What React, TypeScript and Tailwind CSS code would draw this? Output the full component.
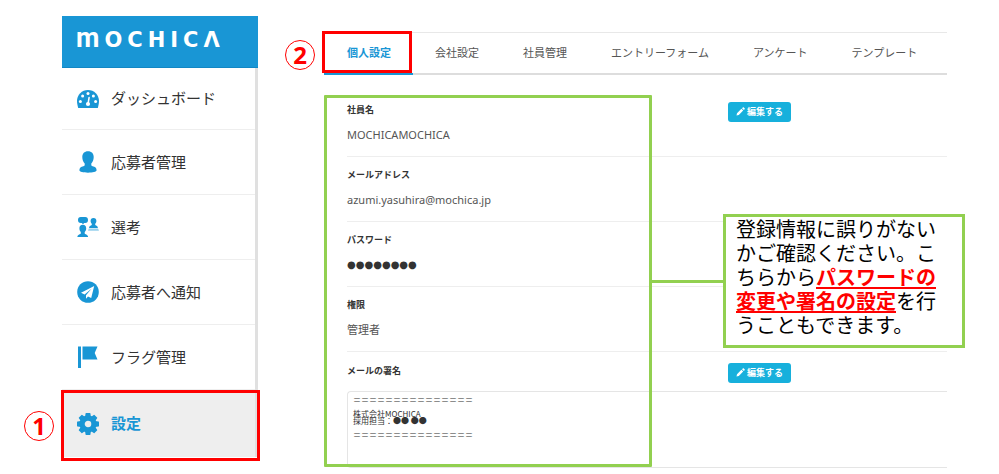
import React, { useState } from 'react';

const GaugeIcon = () => (
  <svg width="22" height="18" viewBox="0 0 22 18" aria-hidden="true">
    <path d="M11 0C4.9 0 0 4.9 0 11c0 2.2.6 4.9 1.200 7h19.600c.6-2.100 1.200-4.800 1.200-7C22 4.900 17.100 0 11 0z" fill="#1996d5" />
    <g fill="#fff">
      <circle cx="3.400" cy="11.500" r="1.500" />
      <circle cx="5.600" cy="6" r="1.500" />
      <circle cx="11" cy="3.600" r="1.500" />
      <circle cx="16.400" cy="6" r="1.500" />
      <circle cx="18.600" cy="11.500" r="1.500" />
      <circle cx="11" cy="14" r="2.100" />
    </g>
    <path d="M11 14l1.100-6.500" stroke="#fff" strokeWidth="1.500" strokeLinecap="round" />
  </svg>
);

const UserIcon = () => (
  <svg width="22" height="22" viewBox="0 0 22 22" fill="#1996d5" aria-hidden="true">
    <path d="M11 .3c3.700 0 5.700 2.200 5.700 5.800 0 2.900-1 5.100-2.400 6.500v1.400c0 .7.600 1 1.300 1.200 2.600.6 4 1.700 4 4.100 0 1.600-4 2.400-8.600 2.400s-8.600-.8-8.600-2.400c0-2.400 1.400-3.500 4-4.100.7-.2 1.300-.5 1.300-1.200v-1.400C6.300 11.200 5.300 9 5.300 6.100 5.300 2.500 7.300.3 11 .3z" />
  </svg>
);

const SelectionIcon = () => (
  <svg width="22" height="22" viewBox="0 0 22 22" fill="#1996d5" aria-hidden="true">
    <path d="M3.800 1h4.400c1.900 0 2.800 1.200 2.800 2.900S10.100 7 8.200 7H7.200L6 8.200 4.800 7h-1C1.900 7 1 5.600 1 3.900S1.900 1 3.800 1z" />
    <path d="M5.800 8.800c2.200 0 3.400 1.300 3.400 3.500 0 1.700-.6 3-1.500 3.800v1.500c0 1 3.400.8 3.400 3.400H.4c0-2.600 3.400-2.400 3.400-3.400v-1.500c-.8-.8-1.400-2.100-1.400-3.800 0-2.200 1.200-3.500 3.400-3.500z" />
    <path d="M16.500 2c1.900 0 2.900 1.100 2.900 2.900 0 1.200-.5 2.100-1.200 2.800v1.100c0 .9 2.700.8 2.700 3.200h-8.800c0-2.400 2.700-2.300 2.700-3.200V7.700c-.7-.7-1.200-1.600-1.200-2.800 0-1.800 1-2.900 2.900-2.900z" />
    <path d="M11.800 12.500h9.200l1 2.200H11z" opacity=".45" />
  </svg>
);

const PlaneIcon = () => (
  <svg width="22" height="22" viewBox="0 0 22 22" aria-hidden="true">
    <circle cx="11" cy="11" r="10.800" fill="#1996d5" />
    <path d="M17.200 5L4 11.800l3.600 1.700L14.500 7.800 9 14.200v3.600l2-2.300 3.200 1.400z" fill="#fff" />
  </svg>
);

const FlagIcon = () => (
  <svg width="22" height="22" viewBox="0 0 22 22" fill="#1996d5" aria-hidden="true">
    <path d="M1 .5h3V22H1zM5.500.5h15L17.700 7l2.800 6.500h-15z" />
  </svg>
);

const GearIcon = () => (
  <svg width="22" height="22" viewBox="0 0 22 22" aria-hidden="true">
    <circle cx="11" cy="11" r="5.900" fill="none" stroke="#1996d5" strokeWidth="5.200" />
    <g fill="#1996d5">
      {[0, 45, 90, 135, 180, 225, 270, 315].map(angle => (
        <path key={angle} d="M8 4L8.600.5q.1-.5.6-.5h3.600q.5 0 .6.500L14 4z" transform={`rotate(${angle} 11 11)`} />
      ))}
    </g>
  </svg>
);

const PencilIcon = () => (
  <svg width="9" height="9" viewBox="0 0 9 9" fill="#fff" aria-hidden="true">
    <path d="M.5 8.500l.5-2.300L5.400 1.800l1.800 1.800L2.800 8zM6 1.200l.8-.8c.3-.3.7-.3 1 0l.8.800c.3.300.3.700 0 1l-.8.800z" />
  </svg>
);

const menuItems = [
  { label: 'ダッシュボード', icon: GaugeIcon },
  { label: '応募者管理', icon: UserIcon },
  { label: '選考', icon: SelectionIcon },
  { label: '応募者へ通知', icon: PlaneIcon },
  { label: 'フラグ管理', icon: FlagIcon },
];

const tabs = ['個人設定', '会社設定', '社員管理', 'エントリーフォーム', 'アンケート', 'テンプレート'];

const profile = [
  { label: '社員名', value: 'MOCHICAMOCHICA', editable: true },
  { label: 'メールアドレス', value: 'azumi.yasuhira@mochica.jp' },
  { label: 'パスワード', value: '●●●●●●●●', secret: true },
  { label: '権限', value: '管理者' },
];

const rule = '＝＝＝＝＝＝＝＝＝＝＝＝＝＝＝';
const defaultSignature = `${rule}\n\n株式会社MOCHICA\n採用担当：●● ●●\n\n${rule}`;

const StepNumber = ({ children }: { children: React.ReactNode }) => (
  <span className="flex size-[30px] items-center justify-center rounded-full border border-[#ff0000] text-2xl font-bold leading-none text-[#ff0000]">
    {children}
  </span>
);

const EditButton = () => (
  <button type="button" className="flex h-5 items-center gap-[2px] rounded-[3px] bg-[#17b0dc] px-2 pb-px text-[9px] font-bold leading-none text-white">
    <PencilIcon />
    編集する
  </button>
);

const Sidebar = () => (
  <aside className="w-[196px] shrink-0">
    <div className="flex h-[52px] items-baseline gap-[5px] border-b border-[#1287c4] bg-[#1996d5] px-[14px] pt-3 font-['DejaVu_Sans'] text-[21px] font-bold leading-none text-white">
      <span className="font-[Roboto] text-[27px] leading-5">m</span>
      <span>O</span>
      <span>C</span>
      <span>H</span>
      <span>I</span>
      <span>C</span>
      <span>Λ</span>
    </div>
    <nav className="border-r-[3px] border-[#e0e0e0] text-[15px]">
      {menuItems.map(({ label, icon: Icon }) => (
        <a key={label} href="#" className="flex h-[65px] items-center gap-3 border-b border-[#eee] pl-[15px] text-[#333] first:h-[62px]">
          <Icon />
          {label}
        </a>
      ))}
      <div className="relative">
        <a href="#" className="flex h-[67px] items-center gap-3 bg-[#eee] pl-[15px] font-bold text-[#1996d5]">
          <GearIcon />
          設定
        </a>
        <div className="pointer-events-none absolute top-0 -right-[5px] -bottom-1 -left-px border-[3px] border-[#ff0000]" />
        <div className="absolute top-[21px] -left-[38px]">
          <StepNumber>1</StepNumber>
        </div>
      </div>
    </nav>
  </aside>
);

export default function App() {
  const [activeTab, setActiveTab] = useState(tabs[0]);
  const [signature, setSignature] = useState(defaultSignature);

  return (
    <div className="flex min-h-screen bg-white pt-4 pr-[52px] pl-[62px] font-['Noto_Sans','Noto_Sans_CJK_JP',sans-serif]">
      <Sidebar />
      <main className="relative ml-[66px] min-w-0 flex-1 pt-4">
        <div className="relative">
          <div className="flex h-[43px] border-t border-b-2 border-t-[#e8e8e8] border-b-[#ddd] pl-px">
            {tabs.map(tab => (
              <button
                key={tab}
                type="button"
                onClick={() => setActiveTab(tab)}
                className={
                  tab === activeTab
                    ? 'relative -mb-[2px] -ml-px border-b-2 border-[#1996d5] pr-[22px] pl-[23px] text-[11px] font-bold whitespace-nowrap text-[#1996d5]'
                    : 'px-[22px] text-[11px] whitespace-nowrap text-[#555]'
                }
              >
                {tab}
              </button>
            ))}
          </div>
          <div className="pointer-events-none absolute -top-px -left-[2px] h-[42px] w-[90px] border-[3px] border-[#ff0000]" />
          <div className="absolute top-2 -left-[39px]">
            <StepNumber>2</StepNumber>
          </div>
        </div>

        <section className="relative mt-[17px] pl-[23px]">
          {profile.map(({ label, value, editable, secret }) => (
            <div key={label} className="grid h-[65px] grid-cols-[381fr_219fr] items-start border-b border-[#eee] pt-[10px]">
              <dl>
                <dt className="text-[9px] font-bold leading-4 text-[#333]">{label}</dt>
                <dd
                  className={
                    secret
                      ? "mt-[7px] font-['DejaVu_Sans'] text-[10px] leading-5 text-[#333]"
                      : 'mt-[7px] text-[11px] leading-5 text-[#555]'
                  }
                >
                  {value}
                </dd>
              </dl>
              <div>{editable && <EditButton />}</div>
            </div>
          ))}
          <div className="grid h-[39px] grid-cols-[381fr_219fr] items-start pt-[11px]">
            <label htmlFor="signature" className="text-[9px] font-bold leading-4 text-[#333]">
              メールの署名
            </label>
            <div>
              <EditButton />
            </div>
          </div>
          <textarea
            id="signature"
            value={signature}
            onChange={e => setSignature(e.target.value)}
            className="block h-[77px] w-full resize-none rounded-l-[4px] border border-r-0 border-[#e5e5e5] px-[5px] py-1 font-['Liberation_Sans_Narrow','Noto_Sans_CJK_JP',sans-serif] text-[8px] leading-[7px] text-[#333] outline-none"
          />

          <div className="pointer-events-none absolute top-[3px] bottom-px left-0 w-[328px] rounded-[1px] border-[3px] border-[#92d050]" />
          <div className="absolute top-[188px] left-[328px] h-[3px] w-[72px] bg-[#92d050]" />
          <div className="absolute top-[122px] left-[399px] w-[242px] border-[3px] border-[#92d050] bg-white pt-[1px] pr-6 pb-[7px] pl-[10px] text-xl leading-6 text-black">
            登録情報に誤りがないかご確認ください。こちらから
            <strong className="text-[#ff0000] underline underline-offset-2 [text-decoration-skip-ink:none]">パスワードの変更や署名の設定</strong>
            を行うこともできます。
          </div>
        </section>
      </main>
    </div>
  );
}
